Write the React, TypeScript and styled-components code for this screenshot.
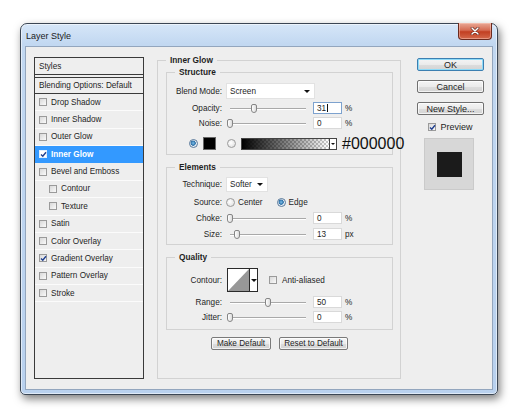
import React from 'react'
import styled, { createGlobalStyle } from 'styled-components'

const GlobalStyle = createGlobalStyle`
  html, body { margin: 0; padding: 0; background: #ffffff; }
  body { font-family: 'Liberation Sans', Arial, sans-serif; color: #1e1e1e; }
  * { box-sizing: border-box; }
`

type StyleItem = { name: string; checked?: boolean; active?: boolean; sub?: boolean }

const styleItems: StyleItem[] = [
  { name: 'Drop Shadow' },
  { name: 'Inner Shadow' },
  { name: 'Outer Glow' },
  { name: 'Inner Glow', checked: true, active: true },
  { name: 'Bevel and Emboss' },
  { name: 'Contour', sub: true },
  { name: 'Texture', sub: true },
  { name: 'Satin' },
  { name: 'Color Overlay' },
  { name: 'Gradient Overlay', checked: true },
  { name: 'Pattern Overlay' },
  { name: 'Stroke' },
]

const App = () => {
  return (
    <Page>
      <GlobalStyle />
      <Window>
        <TitleBar>
          <Title>Layer Style</Title>
          <CloseButton>
            <svg width="10" height="8" viewBox="0 0 10 8">
              <path d="M2 1 L8 7 M8 1 L2 7" stroke="#5a1a10" strokeWidth="2.6" strokeLinecap="round" />
              <path d="M2 1 L8 7 M8 1 L2 7" stroke="#ffffff" strokeWidth="1.5" strokeLinecap="round" />
            </svg>
          </CloseButton>
        </TitleBar>

        <Client>
          <StylesPanel>
            <StylesHeader>Styles</StylesHeader>
            <BlendItem>Blending Options: Default</BlendItem>
            {styleItems.map((item) => (
              <StyleRow key={item.name} $active={item.active} $sub={item.sub}>
                <CheckBox checked={item.checked} light={item.active} />
                <span>{item.name}</span>
              </StyleRow>
            ))}
          </StylesPanel>

          <MainGroup>
            <Legend>Inner Glow</Legend>
            <MainBody>
              <SubGroup>
                <Legend>Structure</Legend>
                <SubBody $pt={6} $pb={4}>
                  <Row $h={16}>
                    <Label>Blend Mode:</Label>
                    <Select $w={89} $h={16}>
                      Screen
                      <Arrow />
                    </Select>
                  </Row>
                  <Row $h={12} $mt={3}>
                    <Label>Opacity:</Label>
                    <Slider value={0.31} />
                    <NumberField $focus>31<Caret /></NumberField>
                    <Unit>%</Unit>
                  </Row>
                  <Row $h={12} $mt={3}>
                    <Label>Noise:</Label>
                    <Slider value={0} />
                    <NumberField>0</NumberField>
                    <Unit>%</Unit>
                  </Row>
                  <ColorRow>
                    <Radio $on />
                    <Swatch />
                    <Radio />
                    <GradientBar />
                    <GradientArrow>
                      <Arrow />
                    </GradientArrow>
                    <HexText>#000000</HexText>
                  </ColorRow>
                </SubBody>
              </SubGroup>

              <SubGroup $mt={8}>
                <Legend>Elements</Legend>
                <SubBody $pt={5} $pb={4}>
                  <Row $h={15}>
                    <Label>Technique:</Label>
                    <Select $w={42} $h={15}>
                      Softer
                      <Arrow />
                    </Select>
                  </Row>
                  <Row $h={12} $mt={4}>
                    <Label>Source:</Label>
                    <Radio />
                    <RadioText>Center</RadioText>
                    <Radio $on $ml={14} />
                    <RadioText>Edge</RadioText>
                  </Row>
                  <Row $h={12} $mt={4}>
                    <Label>Choke:</Label>
                    <Slider value={0} />
                    <NumberField>0</NumberField>
                    <Unit>%</Unit>
                  </Row>
                  <Row $h={12} $mt={4}>
                    <Label>Size:</Label>
                    <Slider value={0.09} />
                    <NumberField>13</NumberField>
                    <Unit>px</Unit>
                  </Row>
                </SubBody>
              </SubGroup>

              <SubGroup $mt={8}>
                <Legend>Quality</Legend>
                <SubBody $pt={6} $pb={6}>
                  <Row $h={24}>
                    <Label>Contour:</Label>
                    <ContourBox>
                      <svg width="21" height="22" viewBox="0 0 21 22">
                        <rect width="21" height="22" fill="#ffffff" />
                        <polygon points="0,22 21,0 21,22" fill="#979797" />
                      </svg>
                    </ContourBox>
                    <ContourArrow>
                      <Arrow />
                    </ContourArrow>
                    <CheckBox style={{ marginLeft: 11 }} />
                    <CheckText>Anti-aliased</CheckText>
                  </Row>
                  <Row $h={12} $mt={4}>
                    <Label>Range:</Label>
                    <Slider value={0.5} />
                    <NumberField>50</NumberField>
                    <Unit>%</Unit>
                  </Row>
                  <Row $h={12} $mt={3}>
                    <Label>Jitter:</Label>
                    <Slider value={0} />
                    <NumberField>0</NumberField>
                    <Unit>%</Unit>
                  </Row>
                </SubBody>
              </SubGroup>

              <DefaultsRow>
                <SmallButton $w={60}>Make Default</SmallButton>
                <SmallButton $w={69}>Reset to Default</SmallButton>
              </DefaultsRow>
            </MainBody>
          </MainGroup>

          <SideColumn>
            <DialogButton $primary>OK</DialogButton>
            <DialogButton>Cancel</DialogButton>
            <DialogButton>New Style...</DialogButton>
            <PreviewRow>
              <CheckBox checked />
              <span>Preview</span>
            </PreviewRow>
            <PreviewBox>
              <PreviewSwatch />
            </PreviewBox>
          </SideColumn>
        </Client>
      </Window>
    </Page>
  )
}

export default App

const CheckBox = ({ checked, light, style }: { checked?: boolean; light?: boolean; style?: React.CSSProperties }) => (
  <Box $light={light} style={style}>
    {checked && (
      <svg width="7" height="7" viewBox="0 0 7 7">
        <path d="M1 3.4 L2.8 5.3 L6 1.2" fill="none" stroke="#1f3f8f" strokeWidth="1.4" />
      </svg>
    )}
  </Box>
)

const Slider = ({ value }: { value: number }) => (
  <SliderTrack>
    <Thumb style={{ left: 1 + value * 76 }} />
  </SliderTrack>
)

const Page = styled.div`
  width: 520px;
  height: 420px;
  padding: 23px 0 0 20px;
  overflow: hidden;
  background: #ffffff;
`

const Window = styled.div`
  width: 478px;
  height: 372px;
  display: flex;
  flex-direction: column;
  padding: 0 4px 4px 4px;
  border: 1px solid #3b4654;
  border-radius: 7px 7px 5px 5px;
  background: linear-gradient(to bottom, #d6e6f8 0px, #c2d8f1 20px, #b9d1ee 100%);
  box-shadow: 2px 4px 9px rgba(0, 0, 0, 0.5), inset 0 0 0 1px rgba(255, 255, 255, 0.55);
`

const TitleBar = styled.div`
  height: 22px;
  display: flex;
  align-items: flex-start;
  justify-content: space-between;
`

const Title = styled.span`
  padding: 7px 0 0 1px;
  font-size: 9px;
  color: #1b1b1b;
`

const CloseButton = styled.div`
  width: 34px;
  height: 17px;
  margin: -1px 1px 0 0;
  display: flex;
  align-items: center;
  justify-content: center;
  border: 1px solid #6b2a1e;
  border-top: none;
  border-radius: 0 0 4px 4px;
  background: linear-gradient(to bottom, #e9a896 0%, #d56b52 45%, #c23f22 55%, #d4694c 100%);
  box-shadow: inset 0 0 0 1px rgba(255, 210, 200, 0.45);
`

const Client = styled.div`
  flex: 1;
  display: flex;
  align-items: flex-start;
  padding: 10px 8px 0 8px;
  background: #eeeeee;
  border: 1px solid #93a6be;
  font-size: 8.2px;
`

const StylesPanel = styled.div`
  width: 110px;
  height: 322px;
  flex-shrink: 0;
  display: flex;
  flex-direction: column;
  border: 1px solid #3a3a3a;
  background: #eeeeee;
`

const StylesHeader = styled.div`
  height: 17px;
  display: flex;
  align-items: center;
  padding-left: 4px;
  border-bottom: 1px solid #3a3a3a;
`

const BlendItem = styled.div`
  height: 17px;
  margin-top: 2px;
  display: flex;
  align-items: center;
  padding-left: 4px;
  border-top: 1px solid #3a3a3a;
  border-bottom: 1px solid #3a3a3a;
`

const StyleRow = styled.div<{ $active?: boolean; $sub?: boolean }>`
  height: 17.36px;
  flex-shrink: 0;
  display: flex;
  align-items: center;
  gap: 4px;
  padding-left: ${(p) => (p.$sub ? 14 : 4)}px;
  border-bottom: 1px solid ${(p) => (p.$active ? '#3399ff' : '#fbfbfb')};
  background: ${(p) => (p.$active ? '#3399ff' : 'transparent')};
  color: ${(p) => (p.$active ? '#ffffff' : '#1e1e1e')};
  font-weight: ${(p) => (p.$active ? 'bold' : 'normal')};
`

const Box = styled.span<{ $light?: boolean }>`
  width: 8px;
  height: 8px;
  flex-shrink: 0;
  display: inline-flex;
  align-items: center;
  justify-content: center;
  border: 1px solid ${(p) => (p.$light ? '#dfefff' : '#9a9a9a')};
  background: ${(p) => (p.$light ? '#ffffff' : 'linear-gradient(135deg, #d8d8d8, #fafafa)')};
  svg { flex-shrink: 0; margin: -1px; }
`

const MainGroup = styled.fieldset`
  width: 244px;
  height: 323px;
  flex-shrink: 0;
  margin: -1px 0 0 13px;
  padding: 0;
  min-width: 0;
  border: 1px solid #d2d2d2;
`

const Legend = styled.legend`
  margin-left: 8px;
  padding: 0 4px;
  font-size: 8.3px;
  line-height: 9px;
  font-weight: bold;
  color: #1e1e1e;
`

const MainBody = styled.div`
  padding: 3px 7px 0 8px;
`

const SubGroup = styled.fieldset<{ $mt?: number }>`
  margin: ${(p) => p.$mt ?? 0}px 0 0 0;
  padding: 0;
  min-width: 0;
  border: 1px solid #d2d2d2;
`

const SubBody = styled.div<{ $pt: number; $pb: number }>`
  display: flex;
  flex-direction: column;
  padding: ${(p) => p.$pt}px 0 ${(p) => p.$pb}px 0;
`

const Row = styled.div<{ $h: number; $mt?: number }>`
  height: ${(p) => p.$h}px;
  margin-top: ${(p) => p.$mt ?? 0}px;
  display: flex;
  align-items: center;
  & > * { flex-shrink: 0; }
`

const Label = styled.span`
  width: 55px;
  margin-right: 4px;
  text-align: right;
  white-space: nowrap;
`

const Select = styled.div<{ $w: number; $h: number }>`
  width: ${(p) => p.$w}px;
  height: ${(p) => p.$h}px;
  display: flex;
  align-items: center;
  justify-content: space-between;
  padding: 0 4px 0 3px;
  background: #ffffff;
  border: 1px solid #e2e2e2;
`

const Arrow = styled.span`
  width: 0;
  height: 0;
  border-left: 3px solid transparent;
  border-right: 3px solid transparent;
  border-top: 3px solid #111111;
`

const SliderTrack = styled.div`
  position: relative;
  width: 84px;
  height: 12px;
  &::before {
    content: '';
    position: absolute;
    left: 4px;
    right: 4px;
    top: 6px;
    height: 1px;
    background: #a9a9a9;
    box-shadow: 0 1px 0 #ffffff;
  }
`

const Thumb = styled.span`
  position: absolute;
  top: 2px;
  width: 6px;
  height: 9px;
  border: 1px solid #858585;
  border-radius: 2px 2px 3px 3px;
  background: linear-gradient(to right, #ffffff, #dcdcdc);
`

const NumberField = styled.div<{ $focus?: boolean }>`
  width: 29px;
  height: 12px;
  margin-left: 3px;
  display: flex;
  align-items: center;
  padding-left: 3px;
  background: #ffffff;
  border: 1px solid ${(p) => (p.$focus ? '#7da2ce' : '#d9d9d9')};
`

const Caret = styled.span`
  width: 1px;
  height: 8px;
  margin-left: 1px;
  background: #111111;
`

const Unit = styled.span`
  margin-left: 3px;
`

const ColorRow = styled.div`
  height: 13px;
  margin-top: 8px;
  padding-left: 22px;
  display: flex;
  align-items: center;
  & > * { flex-shrink: 0; }
`

const Radio = styled.span<{ $on?: boolean; $ml?: number }>`
  width: 9px;
  height: 9px;
  margin-left: ${(p) => p.$ml ?? 0}px;
  border-radius: 50%;
  border: 1px solid ${(p) => (p.$on ? '#58789a' : '#9b9b9b')};
  background: ${(p) =>
    p.$on
      ? 'radial-gradient(circle at 45% 45%, #7fc0ea 0, #2a6ea6 2.3px, #e8eef4 2.9px)'
      : 'radial-gradient(circle at 40% 40%, #ffffff 0, #dadada 100%)'};
`

const RadioText = styled.span`
  margin-left: 3px;
`

const Swatch = styled.span`
  width: 13px;
  height: 13px;
  margin: 0 11px 0 5px;
  background: #000000;
  border: 1px solid #666666;
`

const GradientBar = styled.span`
  width: 89px;
  height: 12px;
  margin-left: 5px;
  border: 1px solid #444444;
  background: linear-gradient(to right, #000000, rgba(0, 0, 0, 0)),
    repeating-conic-gradient(#c8c8c8 0 25%, #ffffff 0 50%) 0 0 / 4px 4px;
`

const GradientArrow = styled.span`
  width: 7px;
  height: 12px;
  display: flex;
  align-items: center;
  justify-content: center;
  border: 1px solid #444444;
  border-left: none;
  background: #ffffff;
  ${Arrow} { border-width: 2px 2px 0 2px; }
`

const HexText = styled.span`
  margin-left: 5px;
  font-size: 16px;
  line-height: 13px;
  color: #111111;
`

const ContourBox = styled.span`
  width: 23px;
  height: 24px;
  margin-left: 1px;
  border: 1px solid #2a2a2a;
  display: flex;
  svg { display: block; }
`

const ContourArrow = styled.span`
  width: 8px;
  height: 24px;
  display: flex;
  align-items: center;
  justify-content: center;
  border: 1px solid #2a2a2a;
  border-left: none;
  background: #ffffff;
`

const CheckText = styled.span`
  margin-left: 5px;
`

const DefaultsRow = styled.div`
  display: flex;
  justify-content: center;
  gap: 8px;
  margin-top: 7px;
`

const SmallButton = styled.div<{ $w: number }>`
  width: ${(p) => p.$w}px;
  height: 13px;
  display: flex;
  align-items: center;
  justify-content: center;
  border: 1px solid #7a7a7a;
  border-radius: 2px;
  background: linear-gradient(to bottom, #f6f6f6 0%, #ebebeb 50%, #dddddd 51%, #d2d2d2 100%);
  box-shadow: inset 0 0 0 1px rgba(255, 255, 255, 0.7);
`

const SideColumn = styled.div`
  width: 67px;
  flex-shrink: 0;
  margin: 1px 0 0 16px;
  display: flex;
  flex-direction: column;
  gap: 9px;
`

const DialogButton = styled.div<{ $primary?: boolean }>`
  height: 13px;
  display: flex;
  align-items: center;
  justify-content: center;
  font-size: 9px;
  border: 1px solid ${(p) => (p.$primary ? '#3c7fb1' : '#707070')};
  border-radius: 2px;
  background: linear-gradient(to bottom, #f4f4f4 0%, #ebebeb 50%, #dddddd 51%, #d4d4d4 100%);
  box-shadow: ${(p) => (p.$primary ? 'inset 0 0 0 1px #8edbf8' : 'inset 0 0 0 1px rgba(255,255,255,0.7)')};
`

const PreviewRow = styled.div`
  height: 12px;
  margin-top: -3px;
  display: flex;
  align-items: center;
  justify-content: center;
  gap: 4px;
  font-size: 9px;
`

const PreviewBox = styled.div`
  width: 50px;
  height: 52px;
  margin: -4px 0 0 7px;
  display: flex;
  align-items: center;
  justify-content: center;
  background: #d7d7d7;
  border: 1px solid #cacaca;
`

const PreviewSwatch = styled.span`
  width: 25px;
  height: 25px;
  background: #1b1b1b;
`
